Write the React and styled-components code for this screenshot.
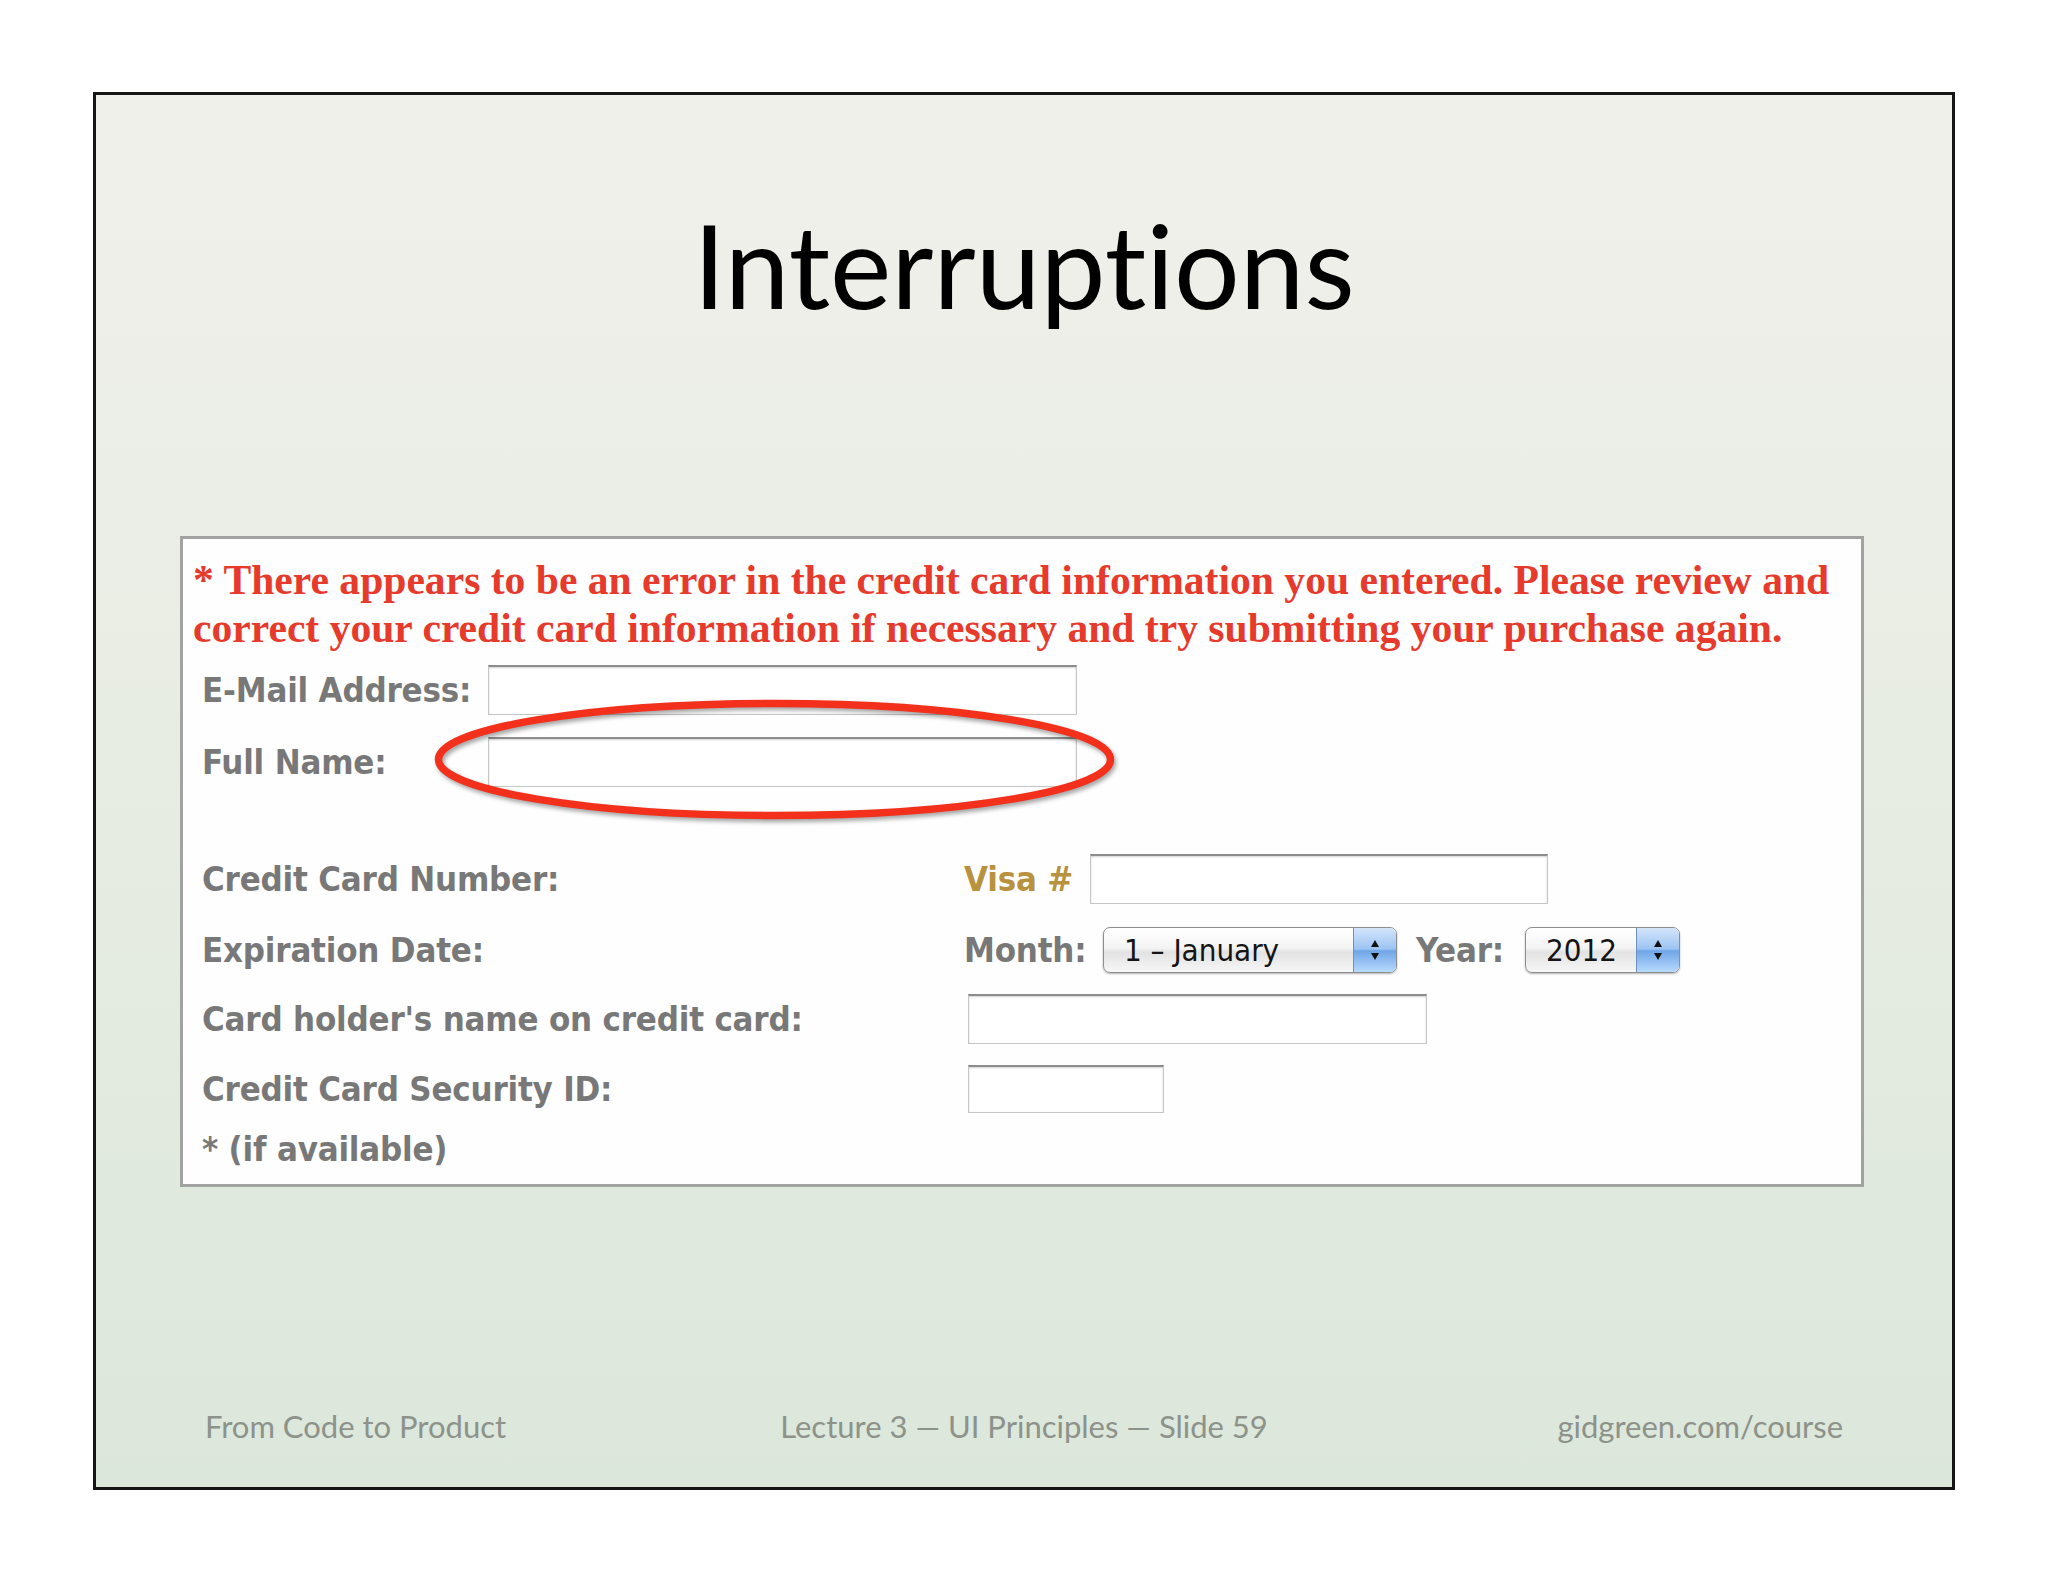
import React from "react";
import styled, { createGlobalStyle } from "styled-components";

const GlobalStyle = createGlobalStyle`
	html, body {
		margin: 0;
		background: #ffffff;
	}
`

const Page = styled.div`
	padding: 92px 0 0 93px;
`

const Slide = styled.section`
	width: 1862px;
	height: 1398px;
	box-sizing: border-box;
	border: 3px solid #161616;
	background: linear-gradient(180deg, #f0f0ea 0%, #e8ede4 45%, #dce7db 100%);
	display: flex;
	flex-direction: column;
`

const Title = styled.h1`
	margin: 113px 0 0;
	font-family: Lato, "Open Sans", sans-serif;
	font-weight: 400;
	font-size: 116px;
	line-height: 113px;
	font-variant-ligatures: none;
	text-align: center;
	color: #000;
`

const FormBox = styled.div`
	position: relative;
	margin: 215px 0 0 84px;
	width: 1684px;
	height: 651px;
	box-sizing: border-box;
	border: 3px solid #a2a2a2;
	background: #fefefe;
	padding-top: 17px;
`

const ErrorText = styled.p`
	margin: 0;
	padding-left: 10px;
	font-family: "Liberation Serif", "Times New Roman", serif;
	font-weight: bold;
	font-size: 41.6px;
	line-height: 48px;
	color: #e63a2c;
	white-space: nowrap;
`

const Row = styled.div`
	display: flex;
	align-items: center;
	height: ${p => p.$h || 50}px;
	margin-top: ${p => p.$mt || 0}px;
	padding-left: 19px;
`

const Label = styled.span`
	flex-shrink: 0;
	width: ${p => (p.$w ? p.$w + "px" : "auto")};
	margin-left: ${p => p.$ml || 0}px;
	font-family: "DejaVu Sans Condensed", "DejaVu Sans", sans-serif;
	font-stretch: condensed;
	font-weight: bold;
	font-size: 34.5px;
	letter-spacing: -0.2px;
	color: ${p => (p.$gold ? "#b8923e" : "#787878")};
	white-space: nowrap;
`

const TextInput = styled.input`
	display: block;
	flex-shrink: 0;
	width: ${p => p.$w}px;
	height: ${p => p.$h || 50}px;
	box-sizing: border-box;
	margin: 0;
	padding: 0;
	background: #fff;
	border: 1px solid #c6c6c6;
	border-top: 2px solid #8c8c8c;
	box-shadow: inset 0 1px 2px rgba(0, 0, 0, 0.18);
	outline: none;
`

const Select = styled.div`
	display: flex;
	flex-shrink: 0;
	width: ${p => p.$w}px;
	height: 46px;
	box-sizing: border-box;
	border: 1px solid #8e8e8e;
	border-radius: 7px;
	overflow: hidden;
	background: linear-gradient(180deg, #ffffff 0%, #f4f4f4 45%, #e2e2e2 55%, #f7f7f7 100%);
	box-shadow: 0 1px 2px rgba(0, 0, 0, 0.3);
`

const SelectValue = styled.span`
	flex: 1;
	display: flex;
	align-items: center;
	padding-left: 20px;
	font-family: "DejaVu Sans Condensed", "DejaVu Sans", sans-serif;
	font-stretch: condensed;
	font-size: 31px;
	color: #141414;
	white-space: nowrap;
`

const Stepper = styled.span`
	width: 42px;
	display: flex;
	align-items: center;
	justify-content: center;
	border-left: 1px solid #6d8fc2;
	background: linear-gradient(180deg, #d4e5fb 0%, #9cc3f2 48%, #6fa5e8 52%, #b8dafd 100%);
`

const Oval = styled.svg`
	position: absolute;
	left: 252px;
	top: 161px;
	overflow: visible;
	filter: drop-shadow(2px 3px 2px rgba(0, 0, 0, 0.35));
	pointer-events: none;
`

const Footer = styled.footer`
	margin-top: auto;
	display: grid;
	grid-template-columns: 1fr auto 1fr;
	padding: 0 109px 41px;
	font-family: Lato, "Open Sans", sans-serif;
	font-size: 31px;
	line-height: 40px;
	color: #8d928b;
`

const FooterItem = styled.span`
	justify-self: ${p => p.$align};
	white-space: nowrap;
`

const Arrows = () => (
	<svg width="12" height="24" viewBox="0 0 12 24">
		<path d="M6 2 L10 9 L2 9 Z" fill="#111" />
		<path d="M6 22 L10 15 L2 15 Z" fill="#111" />
	</svg>
)

const Dropdown = ({ width, value }) => (
	<Select $w={width}>
		<SelectValue>{value}</SelectValue>
		<Stepper><Arrows /></Stepper>
	</Select>
)

export default function App() {
	return (
		<>
			<GlobalStyle />
			<Page>
				<Slide>
					<Title>Interruptions</Title>
					<FormBox>
						<ErrorText>
							* There appears to be an error in the credit card information you entered. Please review and
							<br />
							correct your credit card information if necessary and try submitting your purchase again.
						</ErrorText>
						<Row $mt={13}>
							<Label $w={286}>E-Mail Address:</Label>
							<TextInput $w={589} readOnly />
						</Row>
						<Row $mt={22}>
							<Label $w={286}>Full Name:</Label>
							<TextInput $w={589} readOnly />
						</Row>
						<Row $mt={67}>
							<Label $w={762}>Credit Card Number:</Label>
							<Label $w={126} $gold>Visa #</Label>
							<TextInput $w={458} readOnly />
						</Row>
						<Row $mt={22} $h={48}>
							<Label $w={762}>Expiration Date:</Label>
							<Label $w={139}>Month:</Label>
							<Dropdown width={294} value="1 – January" />
							<Label $w={109} $ml={19}>Year:</Label>
							<Dropdown width={155} value="2012" />
						</Row>
						<Row $mt={20}>
							<Label $w={766}>Card holder's name on credit card:</Label>
							<TextInput $w={459} readOnly />
						</Row>
						<Row $mt={21} $h={48}>
							<Label $w={766}>Credit Card Security ID:</Label>
							<TextInput $w={196} $h={48} readOnly />
						</Row>
						<Row $mt={11}>
							<Label>* (if available)</Label>
						</Row>
						<Oval width="679" height="119" viewBox="0 0 679 119">
							<ellipse cx="339.5" cy="59.5" rx="336" ry="56" fill="none" stroke="#f2301b" strokeWidth="7.5" />
						</Oval>
					</FormBox>
					<Footer>
						<FooterItem $align="start">From Code to Product</FooterItem>
						<FooterItem $align="center">Lecture 3 — UI Principles — Slide 59</FooterItem>
						<FooterItem $align="end">gidgreen.com/course</FooterItem>
					</Footer>
				</Slide>
			</Page>
		</>
	)
}
